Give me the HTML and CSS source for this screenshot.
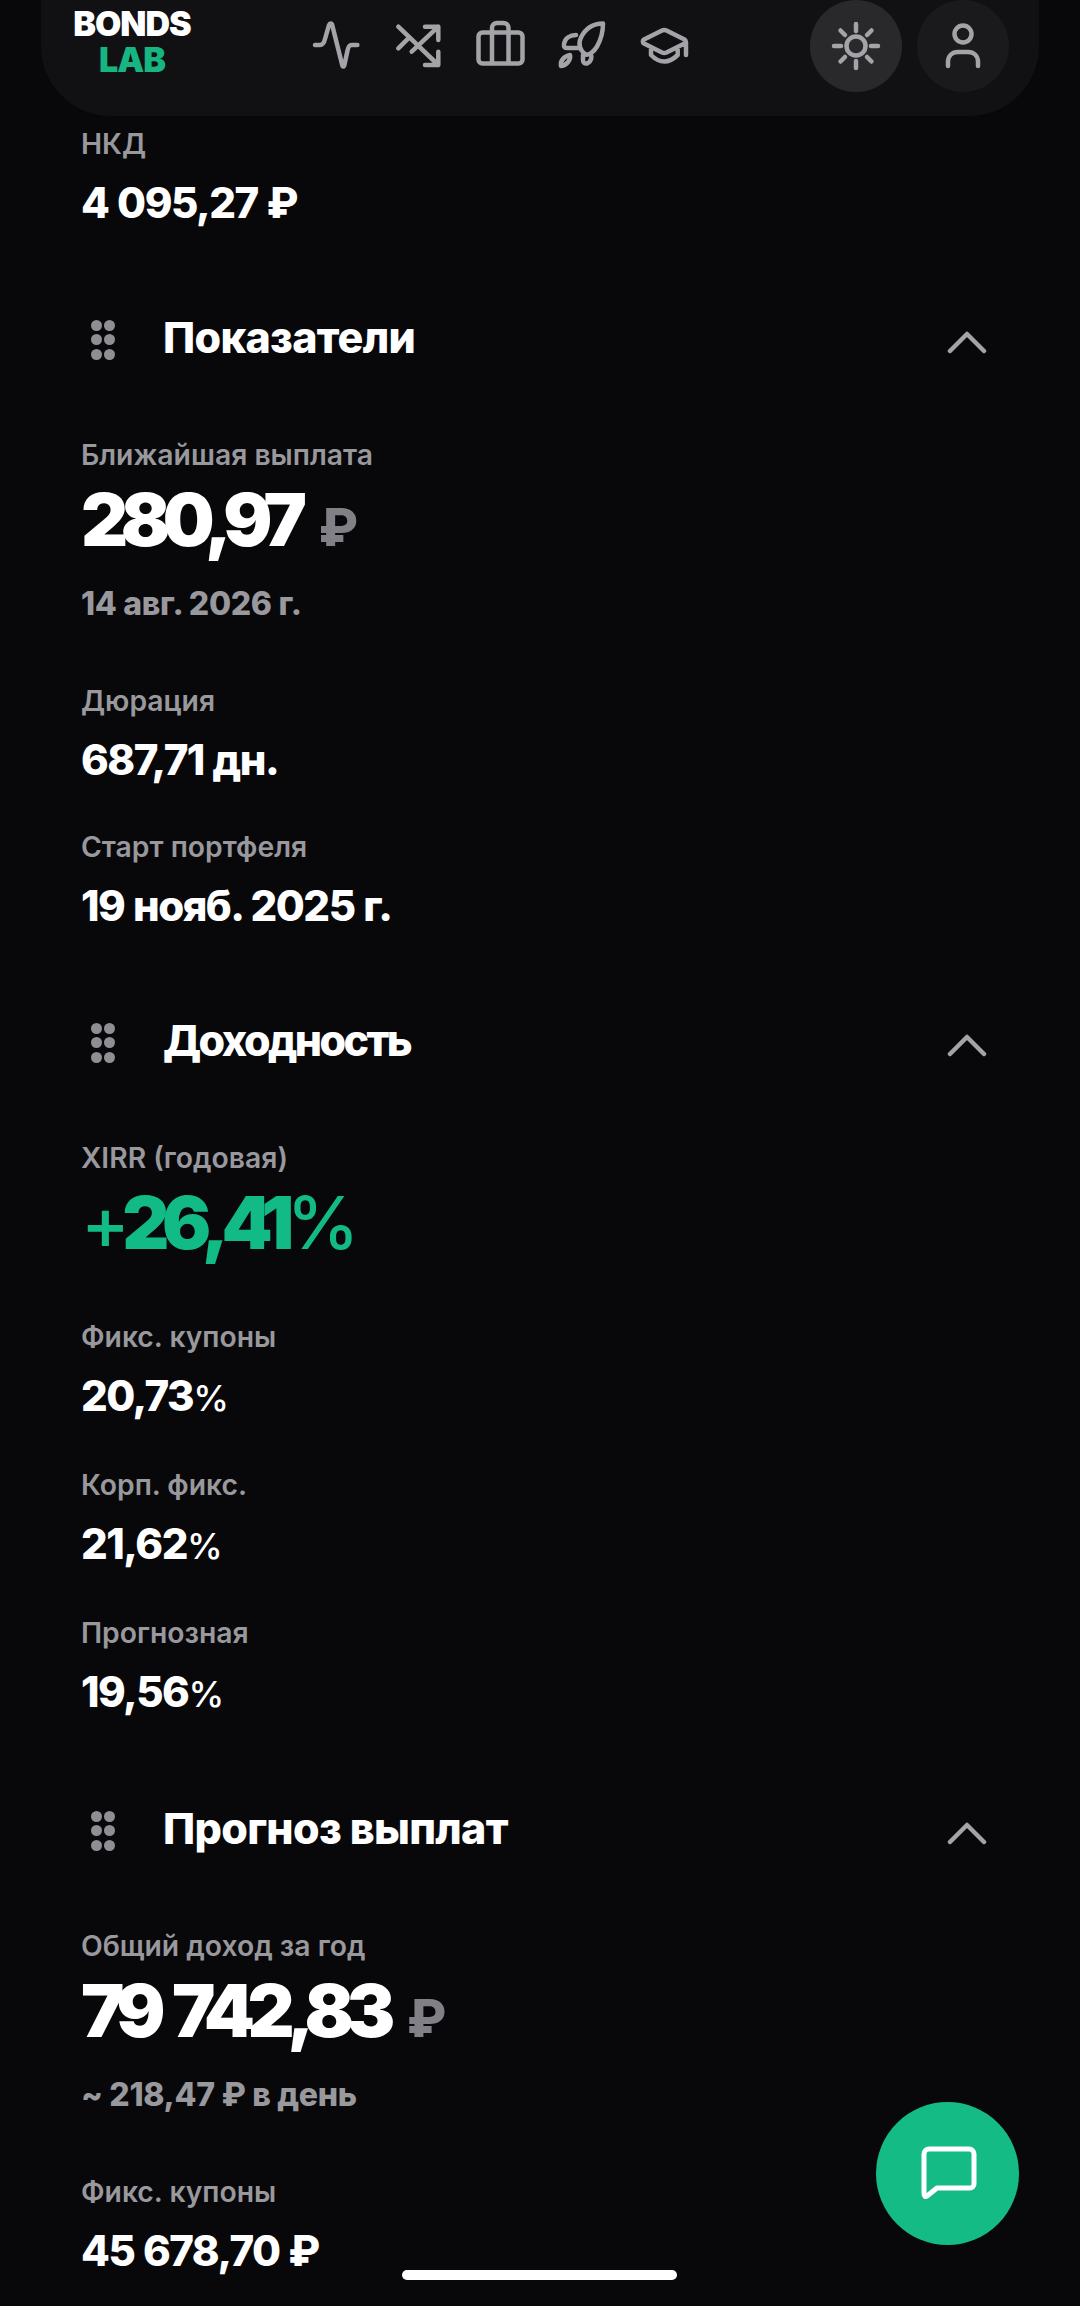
FILE: index.html
```html
<!DOCTYPE html>
<html lang="ru">
<head>
  <meta charset="UTF-8" />
  <title>Bonds Lab</title>
  <link rel="stylesheet" href="styles.css">
</head>
<body>

  <header class="topbar">
    <div class="logo">
      <span class="logo-top">BONDS</span>
      <span class="logo-bottom">LAB</span>
    </div>
    <nav class="nav-icons">
      <svg class="icon" viewBox="0 0 52 52"><path d="M5 26h5c3 0 4-2 5-6l4-14c.8-2 2.600-2 3.200 0l10 40c.5 2 1.600 2 2.200 0l3-14c.8-4 2-6 4-6h6"/></svg>
      <svg class="icon" viewBox="0 0 52 52"><path d="M6.300 7.700 46.300 46M46.300 32.700V46H33M19.700 32.700 46.300 7.700M33 7.700h13.300V21M6.300 29.300l10-10"/></svg>
      <svg class="icon" viewBox="0 0 52 52"><rect x="4.500" y="13.500" width="44" height="31" rx="4"/><path d="M18 44V13.500M34.500 44V13.500M18 13V9a5 5 0 0 1 5-5h6.500a5 5 0 0 1 5 5v4"/></svg>
      <svg class="icon" viewBox="0 0 52 52"><path d="M47 4.500c-9 0-17 4-22 14-2 4-2 8 0 12 1 2 3 4 5 5 3 1 8-3 11-8 4-7 6-15 6-23ZM20 16c-6 0-11 3-12 9-.5 3 1 4 3 4h11M35 35c1 4 0 7-3 9-3 1.500-5 0-5-3v-5M5 47c-1-5 3-10 9-11 1 5-3 10-9 11Z"/></svg>
      <svg class="icon" viewBox="0 0 52 52"><path d="M24 11.500 6 20.500c-1.600 1-1.600 3 0 4l18 9c1.500.7 3 .7 4.500 0l18-9c1.600-1 1.600-3 0-4l-18-9c-1.500-.7-3-.7-4.500 0ZM13 28v8c4 4 9 6.500 13.300 6.500S35.500 40 39.700 36v-8M48 23v13"/></svg>
    </nav>
    <div class="top-buttons">
      <div class="round-btn round-btn-active">
        <svg class="icon icon-round" viewBox="0 0 52 52"><circle cx="26" cy="26" r="9.500"/><path d="M26 4v7M26 41v7M4 26h7M41 26h7M10.500 10.500l4.500 4.500M41.500 10.500 37 15M10.500 41.500 15 37M41.500 41.500 37 37"/></svg>
      </div>
      <div class="round-btn">
        <svg class="icon icon-round" viewBox="0 0 52 52"><circle cx="26" cy="14" r="8.500"/><path d="M11 46v-4c0-6 4-10 10-10h10c6 0 10 4 10 10v4"/></svg>
      </div>
    </div>
  </header>

  <main class="content">
    <div class="stat">
      <div class="stat-label">НКД</div>
      <div class="stat-value">4 095,27 ₽</div>
    </div>

    <section class="block">
      <div class="block-head">
        <span class="grip"><i></i><i></i><i></i><i></i><i></i><i></i></span>
        <h2>Показатели</h2>
        <svg class="chevron" viewBox="0 0 40 24"><path d="M3 21 20 4l17 17"/></svg>
      </div>
      <div class="stat stat-main">
        <div class="stat-label">Ближайшая выплата</div>
        <div class="stat-big">280,97 <span class="rub">₽</span></div>
        <div class="stat-sub">14 авг. 2026 г.</div>
      </div>
      <div class="stat">
        <div class="stat-label">Дюрация</div>
        <div class="stat-value">687,71 дн.</div>
      </div>
      <div class="stat">
        <div class="stat-label">Старт портфеля</div>
        <div class="stat-value">19 нояб. 2025 г.</div>
      </div>
    </section>

    <section class="block">
      <div class="block-head">
        <span class="grip"><i></i><i></i><i></i><i></i><i></i><i></i></span>
        <h2 class="title-tight">Доходность</h2>
        <svg class="chevron" viewBox="0 0 40 24"><path d="M3 21 20 4l17 17"/></svg>
      </div>
      <div class="stat stat-main stat-xirr">
        <div class="stat-label">XIRR (годовая)</div>
        <div class="stat-big green"><span class="thin">+</span>26,41<span class="thin">%</span></div>
      </div>
      <div class="stat">
        <div class="stat-label">Фикс. купоны</div>
        <div class="stat-value">20,73<span class="thin">%</span></div>
      </div>
      <div class="stat">
        <div class="stat-label">Корп. фикс.</div>
        <div class="stat-value">21,62<span class="thin">%</span></div>
      </div>
      <div class="stat">
        <div class="stat-label">Прогнозная</div>
        <div class="stat-value">19,56<span class="thin">%</span></div>
      </div>
    </section>

    <section class="block">
      <div class="block-head">
        <span class="grip"><i></i><i></i><i></i><i></i><i></i><i></i></span>
        <h2>Прогноз выплат</h2>
        <svg class="chevron" viewBox="0 0 40 24"><path d="M3 21 20 4l17 17"/></svg>
      </div>
      <div class="stat stat-main">
        <div class="stat-label">Общий доход за год</div>
        <div class="stat-big">79 742,83 <span class="rub">₽</span></div>
        <div class="stat-sub">~ 218,47 ₽ в день</div>
      </div>
      <div class="stat">
        <div class="stat-label">Фикс. купоны</div>
        <div class="stat-value">45 678,70 ₽</div>
      </div>
    </section>
  </main>

  <button class="chat-btn">
    <svg viewBox="0 0 60 60"><path d="M6 49V10a5 5 0 0 1 5-5h40a5 5 0 0 1 5 5v30a4 4 0 0 1-4 4H19L9 52c-1.500 1-3 .5-3-3Z"/></svg>
  </button>
  <div class="home-bar"></div>

</body>
</html>
```

FILE: styles.css
```css
html, body {
  margin: 0;
  height: 2306px;
  overflow: hidden;
}
body {
  background: #08080b;
  color: #fff;
  font-family: "Inter", "Noto Sans", sans-serif;
  position: relative;
}

/* top bar sits over the scrolled page */
.topbar {
  position: absolute;
  top: 0;
  left: 41px;
  width: 998px;
  height: 116px;
  background: #111113;
  border-radius: 0 0 70px 70px;
  display: flex;
  align-items: flex-start;
  box-sizing: border-box;
  padding-left: 30px;
}
.logo {
  width: 122px;
  padding-top: 6px;
  display: flex;
  flex-direction: column;
  align-items: center;
  font-weight: 900;
  font-size: 34px;
  line-height: 36px;
  letter-spacing: -1px;
}
.logo-bottom {
  color: #17b582;
}
.nav-icons {
  display: flex;
  gap: 30px;
  margin-left: 117px;
  padding-top: 19px;
}
.icon {
  width: 52px;
  height: 52px;
  fill: none;
  stroke: #a3a3a8;
  stroke-width: 4.5;
  stroke-linecap: round;
  stroke-linejoin: round;
}
.top-buttons {
  display: flex;
  gap: 15px;
  margin-left: auto;
  margin-right: 30px;
}
.round-btn {
  width: 92px;
  height: 92px;
  border-radius: 50%;
  background: #1a1a1d;
  display: flex;
  align-items: center;
  justify-content: center;
}
.round-btn-active {
  background: #29292c;
}

.content {
  padding: 127px 81px 0;
}
.block-head {
  display: flex;
  align-items: center;
  height: 60px;
  margin-top: 81px;
  margin-bottom: 71px;
}
.block-head h2 {
  margin: 0;
  font-size: 43px;
  font-weight: 800;
  letter-spacing: -0.7px;
  line-height: 60px;
  flex: 1;
}
.block-head .title-tight {
  letter-spacing: -2.6px;
}
.grip {
  width: 24px;
  height: 40px;
  margin-left: 10px;
  margin-right: 48px;
  margin-top: 5px;
  display: grid;
  grid-template-columns: 11px 11px;
  column-gap: 2px;
  row-gap: 3.5px;
}
.grip i {
  width: 11px;
  height: 11px;
  border-radius: 50%;
  background: #8e8e93;
}
.chevron {
  width: 40px;
  height: 24px;
  margin-right: 12px;
  margin-top: 9px;
  fill: none;
  stroke: #a3a3a8;
  stroke-width: 4.5;
  stroke-linecap: round;
  stroke-linejoin: round;
}
.stat {
  margin-bottom: 47px;
}
.stat-label {
  color: #98989d;
  font-size: 28.3px;
  font-weight: 600;
  line-height: 34px;
}
.stat-value {
  font-size: 42px;
  font-weight: 800;
  line-height: 46px;
  margin-top: 19px;
  letter-spacing: -1.5px;
  word-spacing: 1px;
}
.stat-value .thin {
  font-size: 36px;
}
.stat-big {
  font-size: 73px;
  font-weight: 900;
  line-height: 84px;
  margin-top: 6px;
  letter-spacing: -7.5px;
  word-spacing: 7px;
}
.stat-sub {
  color: #98989d;
  font-size: 32px;
  font-weight: 800;
  letter-spacing: -0.3px;
  line-height: 40px;
  margin-top: 14px;
}
.stat-main {
  margin-bottom: 60px;
}
.stat-xirr {
  margin-bottom: 55px;
}
.rub {
  color: #808086;
  font-size: 52px;
  font-weight: 800;
  letter-spacing: 0;
  margin-left: 5px;
}
.green {
  color: #12bb85;
}
.thin {
  font-weight: 500;
}

.chat-btn {
  position: absolute;
  left: 876px;
  top: 2102px;
  width: 143px;
  height: 143px;
  border-radius: 50%;
  border: none;
  padding: 0;
  background: #14bb85;
  display: flex;
  align-items: center;
  justify-content: center;
}
.chat-btn svg {
  width: 60px;
  height: 60px;
  fill: none;
  stroke: #fff;
  stroke-width: 5;
  stroke-linejoin: round;
}
.home-bar {
  position: absolute;
  left: 402px;
  top: 2270px;
  width: 275px;
  height: 10px;
  border-radius: 5px;
  background: #fff;
}
```
